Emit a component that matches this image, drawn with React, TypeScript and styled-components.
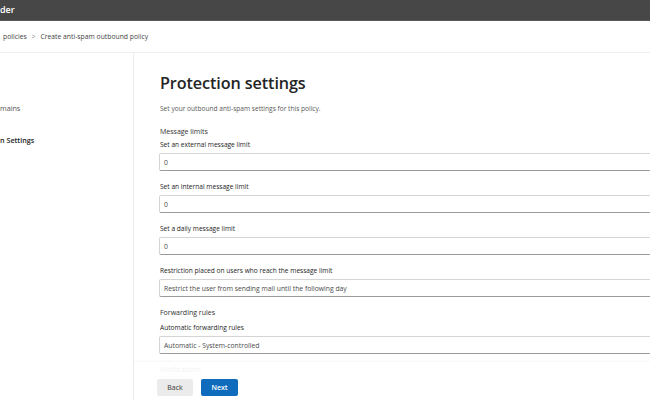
import styled, { createGlobalStyle } from 'styled-components';

const Global = createGlobalStyle`
    html, body { margin: 0; padding: 0; background: #fff; }
    body { font-family: "Open Sans", "Noto Sans", "Liberation Sans", sans-serif; color: #323130; }
`

type FieldProps = { label: string, value: string }

const Field = ({ label, value }: FieldProps) => (
    <FieldBox>
        <Label>{label}</Label>
        <Input>{value}</Input>
    </FieldBox>
)

export default function App() {
    return (
        <Page>
            <Global />
            <TopBar><Brand>der</Brand></TopBar>
            <Crumbs>
                <span>policies</span>
                <Sep>&gt;</Sep>
                <span>Create anti-spam outbound policy</span>
            </Crumbs>
            <Body>
                <Nav>
                    <NavItem>mains</NavItem>
                    <NavItem active>n Settings</NavItem>
                </Nav>
                <Main>
                    <Content>
                        <Title>Protection settings</Title>
                        <Intro>Set your outbound anti-spam settings for this policy.</Intro>
                        <Section>Message limits</Section>
                        <Field label="Set an external message limit" value="0" />
                        <Field label="Set an internal message limit" value="0" />
                        <Field label="Set a daily message limit" value="0" />
                        <Field label="Restriction placed on users who reach the message limit" value="Restrict the user from sending mail until the following day" />
                        <Section spaced>Forwarding rules</Section>
                        <Field label="Automatic forwarding rules" value="Automatic - System-controlled" />
                        <Section spaced>Notifications</Section>
                    </Content>
                    <Footer>
                        <Button>Back</Button>
                        <Button primary>Next</Button>
                    </Footer>
                </Main>
            </Body>
        </Page>
    )
}

const Page = styled.div`
    width: 650px;
    height: 400px;
    overflow: hidden;
    display: flex;
    flex-direction: column;
`

const TopBar = styled.div`
    flex: 0 0 21px;
    background: #474747;
    border-bottom: 1px solid #5a5a5a;
    box-sizing: border-box;
    display: flex;
    align-items: center;
`

const Brand = styled.div`
    color: #fff;
    font-size: 9px;
    font-weight: 600;
    padding-bottom: 1px;
`

const Crumbs = styled.div`
    flex: 0 0 31px;
    border-bottom: 1px solid #efefef;
    display: flex;
    align-items: center;
    gap: 5px;
    padding-left: 3px;
    font-size: 6.8px;
    color: #444;
`

const Sep = styled.span`
    color: #888;
    font-size: 6.5px;
`

const Body = styled.div`
    flex: 1 1 auto;
    display: flex;
    min-height: 0;
`

const Nav = styled.div`
    flex: 0 0 133px;
    border-right: 1px solid #ececec;
    padding-top: 49px;
    display: flex;
    flex-direction: column;
    gap: 20px;
`

const NavItem = styled.div<{ active?: boolean }>`
    font-size: 7.2px;
    line-height: 12px;
    color: ${p => p.active ? '#242424' : '#555'};
    font-weight: ${p => p.active ? 600 : 400};
`

const Main = styled.div`
    flex: 1 1 auto;
    position: relative;
    overflow: hidden;
`

const Content = styled.div`
    padding: 19px 0 0 25px;
`

const Title = styled.h1`
    margin: 0 0 9px 1px;
    font-size: 16.2px;
    line-height: 22px;
    font-weight: 600;
    color: #242424;
    letter-spacing: -0.1px;
`

const Intro = styled.div`
    font-size: 6.6px;
    line-height: 12px;
    color: #5a5a5a;
    margin: 0 0 11px 1px;
`

const Section = styled.div<{ spaced?: boolean }>`
    font-size: 7px;
    line-height: 12px;
    color: #323130;
    margin: ${p => p.spaced ? '2px 0 3px 1px' : '0 0 1px 1px'};
`

const FieldBox = styled.div`
    margin-bottom: 10px;
`

const Label = styled.div`
    font-size: 6.6px;
    line-height: 12px;
    color: #242424;
    margin: 0 0 2px 1px;
`

const Input = styled.div`
    height: 18px;
    box-sizing: border-box;
    width: 520px;
    border: 1px solid #d4d4d4;
    border-bottom-color: #9a9a9a;
    border-radius: 2px;
    padding-left: 4px;
    font-size: 6.8px;
    color: #4a4a4a;
    display: flex;
    align-items: center;
`

const Footer = styled.div`
    position: absolute;
    left: 0;
    right: 0;
    bottom: 0;
    height: 38px;
    background: rgba(255, 255, 255, 0.93);
    box-shadow: 0 -1px 2px rgba(0, 0, 0, 0.04);
    display: flex;
    gap: 8px;
    padding: 17px 0 0 23px;
    box-sizing: border-box;
`

const Button = styled.div<{ primary?: boolean }>`
    width: ${p => p.primary ? 37 : 36}px;
    height: 17px;
    border-radius: 2px;
    display: flex;
    align-items: center;
    justify-content: center;
    font-size: 7px;
    font-weight: ${p => p.primary ? 600 : 400};
    background: ${p => p.primary ? '#0f6cbd' : '#ebebeb'};
    color: ${p => p.primary ? '#fff' : '#333'};
`
